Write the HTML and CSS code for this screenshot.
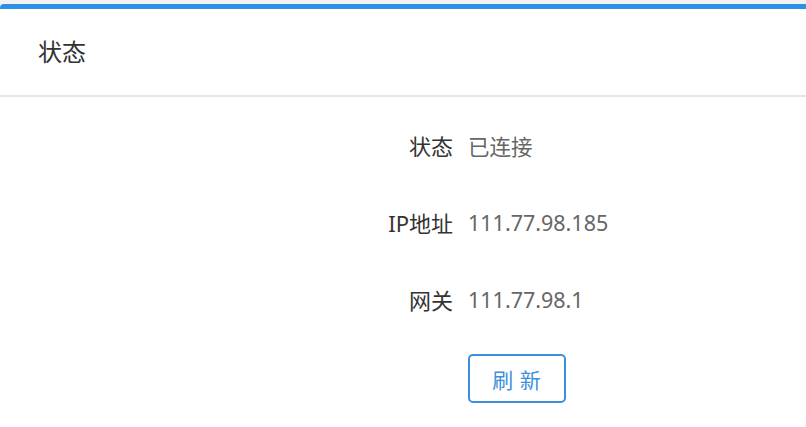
FILE: index.html
```html
<!DOCTYPE html>
<html lang="zh-CN">
<head>
    <meta charset="UTF-8">
    <title>状态</title>
    <link rel="stylesheet" href="styles.css">
</head>
<body>
    <div class="panel">
        <div class="panel-header">状态</div>
        <div class="panel-body">
            <div class="form-row">
                <span class="form-label">状态</span>
                <span class="form-value">已连接</span>
            </div>
            <div class="form-row">
                <span class="form-label">IP地址</span>
                <span class="form-value">111.77.98.185</span>
            </div>
            <div class="form-row">
                <span class="form-label">网关</span>
                <span class="form-value">111.77.98.1</span>
            </div>
            <div class="form-row form-actions">
                <span class="form-label"></span>
                <button class="btn-refresh">刷 新</button>
            </div>
        </div>
    </div>
</body>
</html>
```

FILE: styles.css
```css
body {
    margin: 0;
    padding: 4px 0 0 0;
    background-color: #f2f2f2;
    font-family: "Noto Sans", "Noto Sans CJK SC", sans-serif;
    color: #333;
}

.panel {
    background-color: #fff;
    border-top: 5px solid #2d8fe5;
    border-top-left-radius: 4px;
    min-height: 418px;
}

.panel-header {
    height: 86px;
    line-height: 86px;
    padding-left: 38px;
    font-size: 24px;
    color: #333;
    border-bottom: 2px solid #e6e6e6;
}

.panel-body {
    padding-top: 28px;
}

.form-row {
    display: flex;
    align-items: center;
    height: 40px;
    margin-bottom: 37px;
    font-size: 22px;
}

.form-label {
    width: 453px;
    text-align: right;
    color: #333;
}

.form-value {
    margin-left: 15px;
    color: #666;
    font-size: 21.5px;
}

.form-actions {
    height: 49px;
    margin-top: -2px;
}

.btn-refresh {
    margin-left: 15px;
    width: 98px;
    height: 49px;
    background: #fff;
    border: 2px solid #3d8fdb;
    border-radius: 5px;
    color: #3d8fdb;
    font-family: "Noto Sans CJK SC", sans-serif;
    font-size: 21px;
    letter-spacing: 1px;
    padding: 0;
}
```
